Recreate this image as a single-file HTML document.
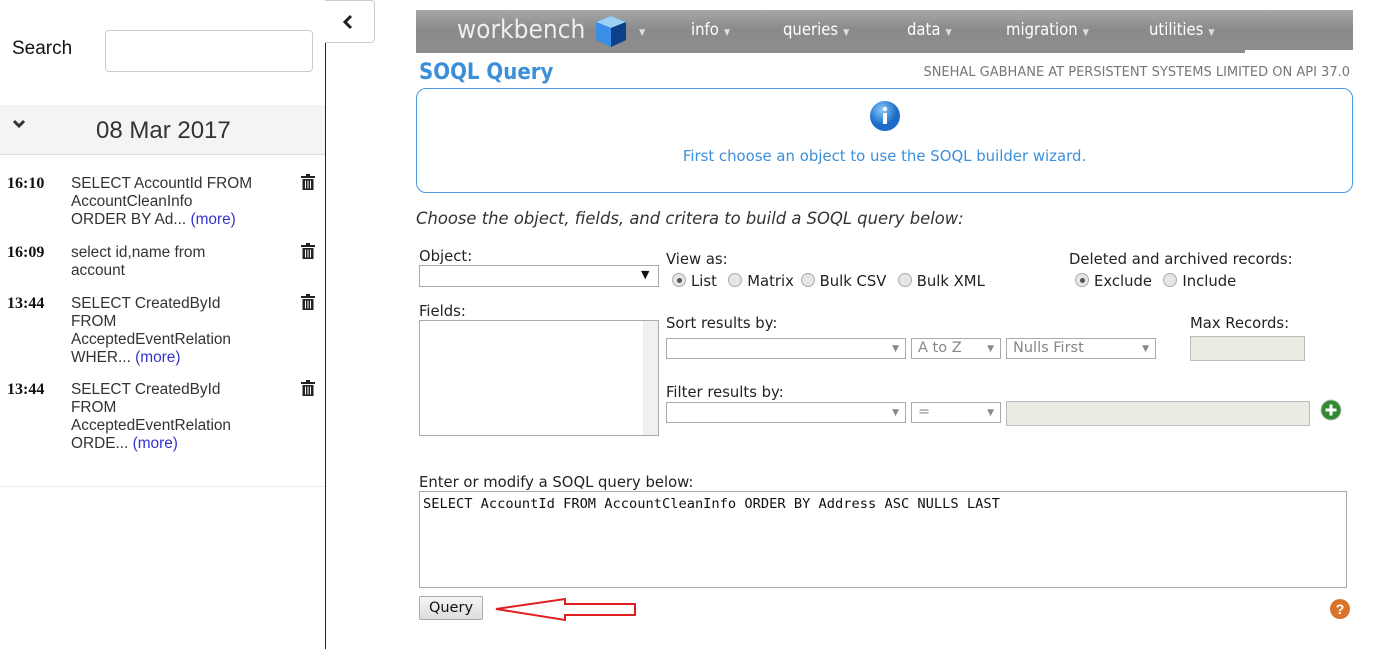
<!DOCTYPE html>
<html><head><meta charset="utf-8"><style>
*{box-sizing:border-box;margin:0;padding:0}
body{width:1379px;height:649px;background:#fff;position:relative;overflow:hidden;font-family:"DejaVu Sans","Liberation Sans",sans-serif;color:#222}
.a{position:absolute}
.side{font-family:"Liberation Sans",sans-serif;font-size:15px;color:#333}
.t{font-family:"Liberation Serif",serif;font-weight:bold;font-size:16px;color:#111}
.q{font-size:15.4px;line-height:18px;color:#333}
.more{color:#33c}
.lbl{font-size:14.8px;color:#222}
.sel{border:1px solid #aaa;background:#fff;height:21px;font-size:14.5px;color:#888;padding:0 6px;line-height:19px}
.sel:after{content:"▼";position:absolute;right:6px;top:1px;font-size:9px;color:#888}
.rad{display:inline-block;width:14px;height:14px;border:1px solid #aaa;border-radius:50%;background:#e6e6e6;vertical-align:-1px;margin-right:5px;margin-left:2px;position:relative}
.rad.on:after{content:"";position:absolute;left:3.5px;top:3.5px;width:5px;height:5px;border-radius:50%;background:#555}
.nav{font-size:16.5px;color:#fff;top:20px;font-family:'DejaVu Sans Condensed','DejaVu Sans',sans-serif}
.nav i{font-style:normal;font-size:9px;color:#ddd;margin-left:5px}
</style></head><body>
<div class="a side" style="left:12px;top:38px;font-size:19px;color:#111">Search</div>
<div class="a" style="left:105px;top:30px;width:208px;height:42px;border:1px solid #ccc;border-radius:4px"></div>
<div class="a" style="left:0;top:105px;width:325px;height:50px;background:#f4f4f4;border-bottom:1px solid #ddd"></div>
<svg class="a" style="left:12px;top:119px" width="14" height="10"><path d="M2 2 L7 7 L12 2" stroke="#333" stroke-width="3" fill="none"/></svg>
<div class="a side" style="left:96px;top:117px;font-size:24px;color:#333">08 Mar 2017</div>
<div class="a t" style="left:7px;top:175px">16:10</div>
<div class="a q side" style="left:71px;top:175px">SELECT AccountId FROM<br>AccountCleanInfo<br>ORDER BY Ad... <span class="more">(more)</span></div>
<div class="a t" style="left:7px;top:244px">16:09</div>
<div class="a q side" style="left:71px;top:244px">select id,name from<br>account</div>
<div class="a t" style="left:7px;top:295px">13:44</div>
<div class="a q side" style="left:71px;top:295px">SELECT CreatedById<br>FROM<br>AcceptedEventRelation<br>WHER... <span class="more">(more)</span></div>
<div class="a t" style="left:7px;top:381px">13:44</div>
<div class="a q side" style="left:71px;top:381px">SELECT CreatedById<br>FROM<br>AcceptedEventRelation<br>ORDE... <span class="more">(more)</span></div>
<svg class="a" style="left:301px;top:174px" width="14" height="16"><g fill="#222"><rect x="0" y="2" width="14" height="2"/><rect x="5" y="0" width="4" height="2"/><path d="M1.5 5h11v11h-11z"/></g><g stroke="#fff"><path d="M4.5 6.5v8M7 6.5v8M9.5 6.5v8"/></g></svg>
<svg class="a" style="left:301px;top:243px" width="14" height="16"><g fill="#222"><rect x="0" y="2" width="14" height="2"/><rect x="5" y="0" width="4" height="2"/><path d="M1.5 5h11v11h-11z"/></g><g stroke="#fff"><path d="M4.5 6.5v8M7 6.5v8M9.5 6.5v8"/></g></svg>
<svg class="a" style="left:301px;top:294px" width="14" height="16"><g fill="#222"><rect x="0" y="2" width="14" height="2"/><rect x="5" y="0" width="4" height="2"/><path d="M1.5 5h11v11h-11z"/></g><g stroke="#fff"><path d="M4.5 6.5v8M7 6.5v8M9.5 6.5v8"/></g></svg>
<svg class="a" style="left:301px;top:380px" width="14" height="16"><g fill="#222"><rect x="0" y="2" width="14" height="2"/><rect x="5" y="0" width="4" height="2"/><path d="M1.5 5h11v11h-11z"/></g><g stroke="#fff"><path d="M4.5 6.5v8M7 6.5v8M9.5 6.5v8"/></g></svg>
<div class="a" style="left:0;top:486px;width:325px;border-top:1px solid #eee"></div>
<div class="a" style="left:325px;top:0;width:1px;height:649px;background:#222"></div>
<div class="a" style="left:325px;top:0;width:50px;height:43px;border:1px solid #ccc;border-left:none;border-radius:0 4px 4px 0;background:#fff"></div>
<svg class="a" style="left:342px;top:14px" width="12" height="16"><path d="M9 2 L3 8 L9 14" stroke="#222" stroke-width="3" fill="none"/></svg>
<div class="a" style="left:416px;top:10px;width:937px;height:43px;background:linear-gradient(#a8a8a8,#8a8a8a 45%,#8e8e8e)"></div>
<div class="a" style="left:1245px;top:50px;width:108px;height:3px;background:#fff"></div>
<div class="a" style="left:457px;top:15px;font-size:26px;color:#eee;font-family:'DejaVu Sans Condensed','DejaVu Sans',sans-serif">workbench</div>
<svg class="a" style="left:594px;top:14px" width="34" height="34"><path d="M17 2 L32 8 L32 26 L17 33 L2 26 L2 8Z" fill="#1a5fb4"/><path d="M17 2 L32 8 L17 14 L2 8Z" fill="#9cd0f5"/><path d="M17 14 L32 8 L32 26 L17 33Z" fill="#0d3f8a"/><path d="M2 8 L17 14 L17 33 L2 26Z" fill="#3a8ee6"/></svg>
<div class="a nav" style="left:634px"><i>▼</i></div>
<div class="a nav" style="left:691px">info<i>▼</i></div>
<div class="a nav" style="left:783px">queries<i>▼</i></div>
<div class="a nav" style="left:907px">data<i>▼</i></div>
<div class="a nav" style="left:1006px">migration<i>▼</i></div>
<div class="a nav" style="left:1149px">utilities<i>▼</i></div>
<div class="a" style="left:419px;top:60px;font-size:22px;font-weight:bold;color:#3b8fd9;font-family:'DejaVu Sans Condensed','DejaVu Sans',sans-serif">SOQL Query</div>
<div class="a" style="right:29px;top:65px;font-size:13px;color:#777;font-family:'DejaVu Sans',sans-serif">SNEHAL GABHANE AT PERSISTENT SYSTEMS LIMITED ON API 37.0</div>
<div class="a" style="left:416px;top:88px;width:937px;height:105px;border:1px solid #4a9ae0;border-radius:10px"></div>
<svg class="a" style="left:869px;top:100px" width="32" height="32"><defs><radialGradient id="g" cx=".4" cy=".3"><stop offset="0" stop-color="#8cc8f8"/><stop offset="1" stop-color="#1a6cc8"/></radialGradient></defs><circle cx="16" cy="16" r="15" fill="url(#g)"/><circle cx="16" cy="9" r="2.2" fill="#fff"/><rect x="14" y="13" width="4" height="11" fill="#fff"/></svg>
<div class="a" style="left:416px;width:937px;top:147px;text-align:center;font-size:14.9px;color:#3b8fd9">First choose an object to use the SOQL builder wizard.</div>
<div class="a" style="left:416px;top:209px;font-size:16.4px;font-style:italic;color:#333">Choose the object, fields, and critera to build a SOQL query below:</div>
<div class="a lbl" style="left:419px;top:248px">Object:</div>
<div class="a" style="left:419px;top:265px;width:240px;height:22px;border:1px solid #aaa"></div>
<div class="a" style="left:641px;top:268px;font-size:11px;color:#111">▼</div>
<div class="a lbl" style="left:666px;top:251px">View as:</div>
<div class="a lbl" style="left:670px;top:273px"><span class="rad on"></span>List &nbsp;<span class="rad"></span>Matrix <span class="rad"></span>Bulk CSV &nbsp;<span class="rad"></span>Bulk XML</div>
<div class="a lbl" style="left:1069px;top:251px">Deleted and archived records:</div>
<div class="a lbl" style="left:1073px;top:273px"><span class="rad on"></span>Exclude &nbsp;<span class="rad"></span>Include</div>
<div class="a lbl" style="left:419px;top:303px">Fields:</div>
<div class="a" style="left:419px;top:320px;width:240px;height:116px;border:1px solid #aaa"><div class="a" style="right:0;top:0;width:15px;height:114px;background:#f0f0f0"></div></div>
<div class="a lbl" style="left:666px;top:315px">Sort results by:</div>
<div class="a sel" style="left:666px;top:338px;width:240px"></div>
<div class="a sel" style="left:911px;top:338px;width:90px">A to Z</div>
<div class="a sel" style="left:1006px;top:338px;width:150px">Nulls First</div>
<div class="a lbl" style="left:1190px;top:315px">Max Records:</div>
<div class="a" style="left:1190px;top:336px;width:115px;height:25px;border:1px solid #bbb;background:#ebebe4"></div>
<div class="a lbl" style="left:666px;top:384px">Filter results by:</div>
<div class="a sel" style="left:666px;top:402px;width:240px"></div>
<div class="a sel" style="left:911px;top:402px;width:90px">=</div>
<div class="a" style="left:1006px;top:401px;width:304px;height:25px;border:1px solid #bbb;background:#ebebe4"></div>
<svg class="a" style="left:1320px;top:399px" width="22" height="22"><circle cx="11" cy="11" r="10" fill="#2e8b2e" stroke="#bbb"/><path d="M11 5.5v11M5.5 11h11" stroke="#fff" stroke-width="3"/></svg>
<div class="a lbl" style="left:419px;top:474px">Enter or modify a SOQL query below:</div>
<div class="a" style="left:419px;top:491px;width:928px;height:97px;border:1px solid #aaa;padding:4px 3px;font-family:'DejaVu Sans Mono','Liberation Mono',monospace;font-size:13.7px;color:#111">SELECT AccountId FROM AccountCleanInfo ORDER BY Address ASC NULLS LAST</div>
<div class="a" style="left:419px;top:596px;width:64px;height:24px;border:1px solid #aaa;border-radius:2px;background:linear-gradient(#f6f6f6,#ddd);font-size:14.5px;text-align:center;line-height:22px;color:#111">Query</div>
<svg class="a" style="left:490px;top:596px" width="150" height="26"><path d="M6 13 L75 3 L75 8 L145 8 L145 19 L75 19 L75 24 Z" fill="none" stroke="#e02020" stroke-width="2"/></svg>
<svg class="a" style="left:1329px;top:598px" width="22" height="22"><circle cx="11" cy="11" r="10" fill="#d9732a"/><text x="11" y="16" font-size="14" font-weight="bold" fill="#fff" text-anchor="middle" font-family="Liberation Sans">?</text></svg>
</body></html>
